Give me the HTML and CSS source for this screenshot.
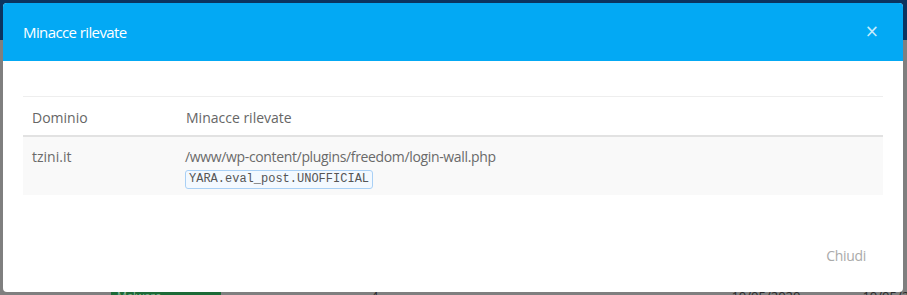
FILE: index.html
```html
<!DOCTYPE html>
<html lang="it">
<head>
<meta charset="utf-8">
<title>Minacce rilevate</title>
<link rel="stylesheet" href="styles.css">
</head>
<body>
<div class="page">
  <div class="topbar"></div>
  <div class="under">
    <div class="under-row">
      <span class="under-badge">Malware</span>
      <span class="under-num">4</span>
      <span class="under-date">10/05/2020</span>
      <span class="under-date2">10/05/2020</span>
    </div>
  </div>
</div>
<div class="modal">
  <div class="modal-header">
    <h4 class="modal-title">Minacce rilevate</h4>
    <button class="close" type="button">&times;</button>
  </div>
  <div class="modal-body">
    <table class="threats">
      <thead>
        <tr><th class="col-domain">Dominio</th><th>Minacce rilevate</th></tr>
      </thead>
      <tbody>
        <tr>
          <td>tzini.it</td>
          <td>
            <div class="path">/www/wp-content/plugins/freedom/login-wall.php</div>
            <code class="sig">YARA.eval_post.UNOFFICIAL</code>
          </td>
        </tr>
      </tbody>
    </table>
  </div>
  <div class="modal-footer">
    <button class="btn-close" type="button">Chiudi</button>
  </div>
</div>
</body>
</html>
```
FILE: styles.css
```css
html, body {
  margin: 0;
  padding: 0;
}
body {
  width: 907px;
  height: 295px;
  overflow: hidden;
  background: #7f7f7f;
  font-family: "Open Sans", "Liberation Sans", sans-serif;
  position: relative;
}
.page {
  height: 295px;
  display: flex;
  flex-direction: column;
}
.topbar {
  height: 40px;
  background: #0b3460;
}
.under {
  flex: 1;
  display: flex;
  flex-direction: column;
  justify-content: flex-end;
}
.under-row {
  height: 8px;
  display: flex;
  align-items: flex-start;
  font-size: 13px;
  line-height: 18px;
  color: #2a2a2a;
}
.under-row span { flex-shrink: 0; }
.under-badge {
  margin-left: 111px;
  width: 110px;
  height: 20px;
  background: #1d6a37;
  color: #8fb59a;
  font-size: 11px;
  text-indent: 6px;
}
.under-num { margin-left: 150px; }
.under-date { margin-left: 353px; }
.under-date2 { margin-left: 62px; }

.modal {
  position: absolute;
  left: 3px;
  top: 3px;
  width: 900px;
  height: 289px;
  background: #fff;
  border-radius: 4px;
  overflow: hidden;
  display: flex;
  flex-direction: column;
}
.modal-header {
  height: 58px;
  background: #03a9f4;
  display: flex;
  align-items: center;
  justify-content: space-between;
  padding: 0 20px;
  box-sizing: border-box;
}
.modal-title {
  margin: 0;
  font-family: "Open Sans", sans-serif;
  font-weight: 400;
  font-size: 15px;
  letter-spacing: -0.6px;
  color: #fff;
}
.close {
  background: none;
  border: 0;
  padding: 0;
  color: #c8ecfc;
  font-family: "DejaVu Sans", sans-serif;
  font-size: 17px;
  line-height: 1;
  margin-right: 4px;
  margin-top: -2px;
}
.modal-body {
  padding: 35px 20px 0;
}
.threats {
  width: 100%;
  border-collapse: collapse;
  font-size: 14px;
  color: #666;
}
.threats th {
  text-align: left;
  font-weight: 400;
  color: #666;
  border-top: 1px solid #eee;
  border-bottom: 2px solid #e2e2e2;
  padding: 10px 9px 8px;
  height: 20px;
}
.threats th.col-domain { width: 136px; }
.threats td {
  background: #f9f9f9;
  vertical-align: top;
  padding: 10px 9px 6px 9px;
  color: #6a6a6a;
}
.path {
  line-height: 20px;
  letter-spacing: -0.35px;
  margin-left: -1px;
}
.sig {
  display: inline-block;
  margin-top: 2px;
  margin-left: -1px;
  padding: 2px 3px;
  font-family: "Liberation Mono", monospace;
  font-size: 12px;
  line-height: 13px;
  color: #555;
  background: #f3f9ff;
  border: 1px solid #a9d0f5;
  border-radius: 3px;
}
.modal-footer {
  margin-top: auto;
  padding: 0 20px 27px;
  display: flex;
  justify-content: flex-end;
}
.btn-close {
  background: none;
  border: 0;
  padding: 0 17px;
  font-family: "Open Sans", sans-serif;
  font-size: 14px;
  letter-spacing: -0.3px;
  color: #aaa;
}
```
